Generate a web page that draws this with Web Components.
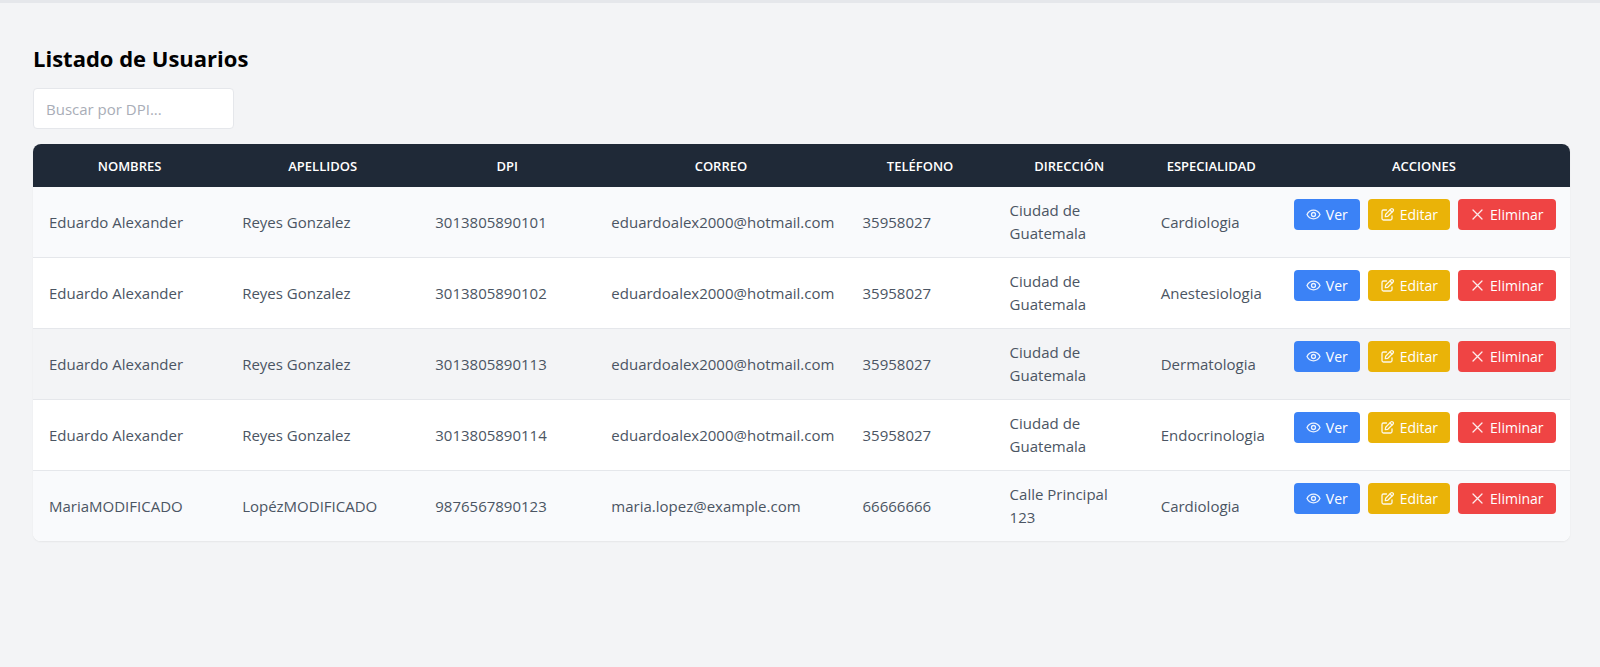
<!DOCTYPE html>
<html lang="es">
<head>
<meta charset="utf-8">
<meta name="viewport" content="width=device-width, initial-scale=1">
<title>Listado de Usuarios</title>
<style>
  body {
    margin: 0;
    min-height: 100vh;
    background: #f3f4f6;
    color: #000;
    font-family: "Open Sans", "Noto Sans", sans-serif;
    font-size: 15px;
    line-height: 23px;
  }
</style>
</head>
<body>
<users-page>
  <span slot="title">Listado de Usuarios</span>
  <search-field slot="search" placeholder="Buscar por DPI..."></search-field>
  <users-table></users-table>
</users-page>

<template id="users-page">
  <style>
    :host { display: block; box-sizing: border-box; border-top: 3px solid #e5e7eb; padding: 39px 30px 40px 33px; }
    h1 { margin: 0 0 14px; font-size: 22px; line-height: 32px; font-weight: 700; }
    .search { margin-bottom: 15px; }
  </style>
  <h1><slot name="title"></slot></h1>
  <div class="search"><slot name="search"></slot></div>
  <slot></slot>
</template>

<template id="search-field">
  <style>
    :host { display: block; }
    input {
      box-sizing: border-box; display: block; width: 201px; height: 41px; margin: 0; padding: 8px 12px;
      border: 1px solid #e5e7eb; border-radius: 4px; background: #fff; color: #374151;
      font: inherit; outline: none;
    }
    input::placeholder { color: #a9adb7; opacity: 1; }
  </style>
  <input type="search">
</template>

<template id="action-button">
  <style>
    :host { display: block; }
    button {
      display: flex; align-items: center; gap: 5px; height: 31px; margin: 0; padding: 0 12px;
      border: 0; border-radius: 4px; background: var(--action-color, #3b82f6); color: #fff;
      font: inherit; font-size: 14px; cursor: pointer;
    }
    svg { display: block; width: 15px; height: 15px; fill: none; stroke: currentColor; stroke-width: 1.3; stroke-linecap: round; stroke-linejoin: round; opacity: .9; }
  </style>
  <button type="button"><svg viewBox="0 0 15 15" aria-hidden="true"></svg><slot></slot></button>
</template>

<template id="users-table">
  <style>
    :host { display: block; overflow: hidden; border-radius: 8px; box-shadow: 0 1px 2px rgb(0 0 0 / 6%); }
    table { width: 100%; table-layout: fixed; border-collapse: separate; border-spacing: 0; background: #fff; }
    th { padding: 13px 16px 12px; background: #1f2937; color: #fff; font-size: 13px; line-height: 18px; font-weight: 600; text-align: center; text-transform: uppercase; }
    td { padding: 12px 16px; border-bottom: 1px solid #e5e7eb; color: #4b5563; text-align: left; vertical-align: middle; white-space: nowrap; }
    tbody tr:last-child td { border-bottom: 0; }
    td.address { white-space: normal; }
    td.actions { vertical-align: top; }
    tbody tr:nth-child(odd) { background: #f9fafc; }
    tbody tr.current { background: #f3f4f6; }
    .group { display: flex; gap: 8px; }
    .edit { --action-color: #eab308; }
    .delete { --action-color: #ef4444; }
    .names { width: 193px; } .dpi { width: 176px; } .mail { width: 251px; } .phone { width: 147px; }
    .street { width: 151px; } .field { width: 133px; } .tools { width: 292px; }
  </style>
  <table>
    <colgroup><col class="names"><col class="names"><col class="dpi"><col class="mail"><col class="phone"><col class="street"><col class="field"><col class="tools"></colgroup>
    <thead><tr>
      <th scope="col">Nombres</th><th scope="col">Apellidos</th><th scope="col">DPI</th><th scope="col">Correo</th>
      <th scope="col">Teléfono</th><th scope="col">Dirección</th><th scope="col">Especialidad</th><th scope="col">Acciones</th>
    </tr></thead>
    <tbody></tbody>
  </table>
</template>

<script>
  const attach = (host, id) => {
    const root = host.attachShadow({ mode: "open" });
    root.append(document.getElementById(id).content.cloneNode(true));
    return root;
  };

  const ICONS = {
    eye: '<path d="M1 7.500C2.300 4.900 4.700 3.200 7.500 3.200s5.200 1.700 6.500 4.300C12.700 10.100 10.300 11.800 7.500 11.800S2.300 10.100 1 7.500Z"/><circle cx="7.500" cy="7.500" r="2"/>',
    edit: '<path d="M6.500 3H3.500A1.500 1.500 0 0 0 2 4.500v7A1.500 1.500 0 0 0 3.500 13h7a1.500 1.500 0 0 0 1.500-1.500V8.800"/><path d="m5.300 9.700.4-2.500 5.300-5.300a1.200 1.200 0 0 1 1.700 0l.4.4a1.200 1.200 0 0 1 0 1.700L7.800 9.300Z"/><path d="m10 3 2 2"/>',
    times: '<path d="m3 3 9 9M12 3l-9 9"/>'
  };

  const USERS = [
    ["Eduardo Alexander", "Reyes Gonzalez", "3013805890101", "eduardoalex2000@hotmail.com", "35958027", "Ciudad de Guatemala", "Cardiologia"],
    ["Eduardo Alexander", "Reyes Gonzalez", "3013805890102", "eduardoalex2000@hotmail.com", "35958027", "Ciudad de Guatemala", "Anestesiologia"],
    ["Eduardo Alexander", "Reyes Gonzalez", "3013805890113", "eduardoalex2000@hotmail.com", "35958027", "Ciudad de Guatemala", "Dermatologia"],
    ["Eduardo Alexander", "Reyes Gonzalez", "3013805890114", "eduardoalex2000@hotmail.com", "35958027", "Ciudad de Guatemala", "Endocrinologia"],
    ["MariaMODIFICADO", "LopézMODIFICADO", "9876567890123", "maria.lopez@example.com", "66666666", "Calle Principal 123", "Cardiologia"]
  ];
  const CURRENT_ROW = 2;
  const ADDRESS_COLUMN = 5;

  customElements.define("users-page", class extends HTMLElement {
    constructor() { super(); attach(this, "users-page"); }
  });

  customElements.define("search-field", class extends HTMLElement {
    constructor() { super(); this.input = attach(this, "search-field").querySelector("input"); }
    connectedCallback() {
      const text = this.getAttribute("placeholder") || "";
      this.input.placeholder = text;
      this.input.setAttribute("aria-label", text);
    }
  });

  customElements.define("action-button", class extends HTMLElement {
    constructor() { super(); this.icon = attach(this, "action-button").querySelector("svg"); }
    connectedCallback() { this.icon.innerHTML = ICONS[this.getAttribute("icon")] || ""; }
  });

  customElements.define("users-table", class extends HTMLElement {
    constructor() {
      super();
      const body = attach(this, "users-table").querySelector("tbody");
      USERS.forEach((user, index) => {
        const row = body.insertRow();
        row.classList.toggle("current", index === CURRENT_ROW);
        user.forEach((value, column) => {
          const cell = row.insertCell();
          cell.textContent = value;
          cell.classList.toggle("address", column === ADDRESS_COLUMN);
        });
        const actions = row.insertCell();
        actions.className = "actions";
        actions.innerHTML = '<div class="group"><action-button icon="eye">Ver</action-button>' +
          '<action-button class="edit" icon="edit">Editar</action-button>' +
          '<action-button class="delete" icon="times">Eliminar</action-button></div>';
      });
    }
  });
</script>
</body>
</html>
